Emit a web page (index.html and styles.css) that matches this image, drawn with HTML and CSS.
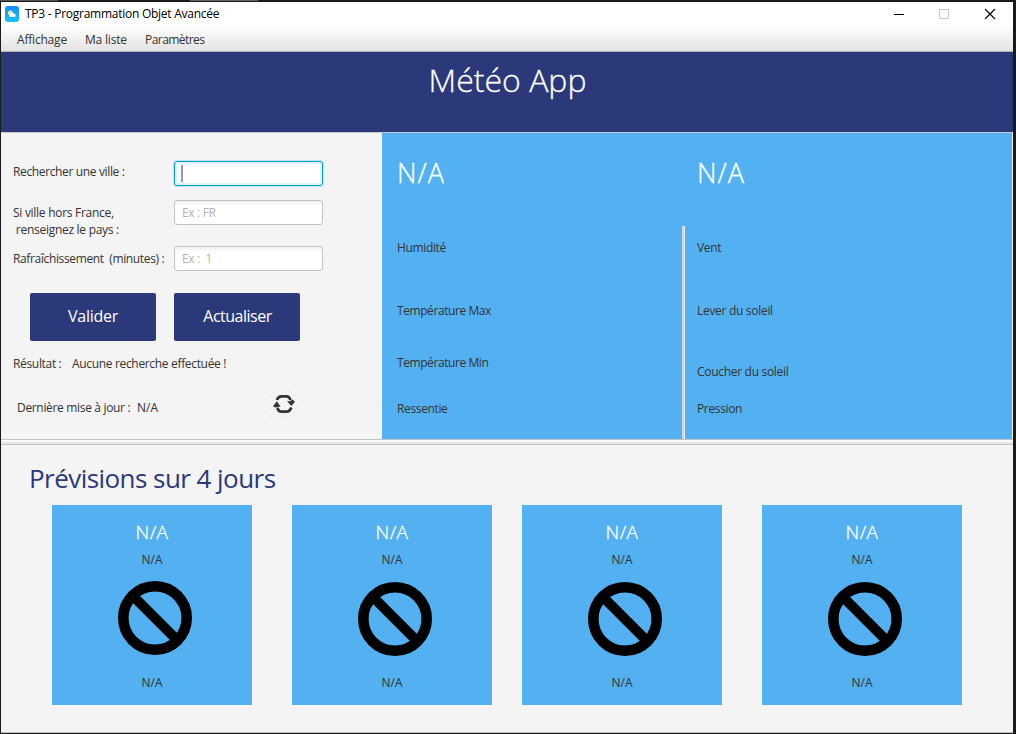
FILE: index.html
```html
<!DOCTYPE html>
<html lang="fr">
<head>
<meta charset="utf-8">
<title>TP3 - Programmation Objet Avancée</title>
<link rel="stylesheet" href="styles.css">
</head>
<body>
<svg class="defs" width="0" height="0">
  <symbol id="forbidden" viewBox="0 0 74 74">
    <circle cx="37" cy="37" r="31.700" fill="none" stroke="#000" stroke-width="10.600"/>
    <path d="M16 16 58 58" stroke="#000" stroke-width="10"/>
  </symbol>
</svg>
<div class="window">
  <header class="titlebar">
    <svg class="app-icon" width="14" height="16" viewBox="0 0 14 16">
      <defs><linearGradient id="sky" x1="0" y1="0" x2="0" y2="1"><stop offset="0" stop-color="#168bfa"/><stop offset="1" stop-color="#12c4ff"/></linearGradient></defs>
      <rect width="14" height="16" rx="3" fill="url(#sky)"/>
      <circle cx="5.300" cy="7" r="2.400" fill="#ffe680"/>
      <path d="M4.800 11a1.700 1.700 0 0 1 .3-3a2.200 2.200 0 0 1 4 -.2a1.700 1.700 0 0 1 .7 3.200z" fill="#fff"/>
    </svg>
    <span class="app-name">TP3 - Programmation Objet Avancée</span>
    <svg class="controls" width="103" height="12" viewBox="0 0 103 12">
      <path d="M0 6.500h10" stroke="#000"/>
      <rect x="45.500" y="1.500" width="9" height="9" fill="none" stroke="#ccc"/>
      <path d="M91 1l10 10M101 1l-10 10" stroke="#000" stroke-width="1.200"/>
    </svg>
  </header>
  <nav class="menubar">
    <span class="menu-1">Affichage</span>
    <span class="menu-2">Ma liste</span>
    <span class="menu-3">Paramètres</span>
  </nav>
  <div class="banner"><h1>Météo App</h1></div>
  <main class="main">
    <section class="search">
      <div class="row"><label class="l-city">Rechercher une ville :</label><div class="field focused"><i class="caret"></i></div></div>
      <div class="row row-country"><label>Si ville hors France,<br>&nbsp;renseignez le pays :</label><div class="field">Ex : FR</div></div>
      <div class="row"><label class="l-refresh">Rafraîchissement&nbsp; (minutes) :</label><div class="field">Ex :&nbsp; 1</div></div>
      <div class="buttons"><div class="button">Valider</div><div class="button narrow">Actualiser</div></div>
      <div class="result"><span class="r-label">Résultat :</span><span>Aucune recherche effectuée !</span></div>
      <div class="update">
        <span class="u-label">Dernière mise à jour :</span><span class="u-value">N/A</span>
        <svg class="refresh" width="30" height="30" viewBox="0 0 30 30">
          <path d="M0 9 9 0M0 15 7 8M0 21 5 16M0 29 6 23M12 4 16 0M20 3 23 0M24 8 30 2M26 11 30 7M26 20 30 16M22 28 30 20M12 30 17 25" stroke="#eaeaea" fill="none"/>
          <path d="M8 11Q9 7.300 12.500 7.300H17.500Q20.500 7.300 21.500 11M8.300 19Q9.500 22.600 12.500 22.600H17.500Q21 22.600 22.300 18.500" fill="none" stroke="#333" stroke-width="2.700"/>
          <path d="M18 12.300 21 12.300 23.500 10.500 26 12.800 22.300 17zM4 17.200 7.700 12.200 11.500 17.200 9 18.300 6.500 18.500z" fill="#333"/>
        </svg>
      </div>
    </section>
    <section class="weather">
      <div class="col">
        <h2>N/A</h2>
        <p class="a1">Humidité</p><p class="a2">Température Max</p><p class="a3">Température Min</p><p class="a4">Ressentie</p>
      </div>
      <div class="rule"></div>
      <div class="col">
        <h2>N/A</h2>
        <p class="a1">Vent</p><p class="a2">Lever du soleil</p><p class="b3">Coucher du soleil</p><p class="b4">Pression</p>
      </div>
    </section>
  </main>
  <div class="divider"></div>
  <section class="forecast">
    <h2>Prévisions sur 4 jours</h2>
    <div class="cards">
      <article class="card first"><h3>N/A</h3><p>N/A</p><svg width="74" height="74"><use href="#forbidden"/></svg><p class="temp">N/A</p></article>
      <article class="card"><h3>N/A</h3><p>N/A</p><svg width="74" height="74"><use href="#forbidden"/></svg><p class="temp">N/A</p></article>
      <article class="card near"><h3>N/A</h3><p>N/A</p><svg width="74" height="74"><use href="#forbidden"/></svg><p class="temp">N/A</p></article>
      <article class="card"><h3>N/A</h3><p>N/A</p><svg width="74" height="74"><use href="#forbidden"/></svg><p class="temp">N/A</p></article>
    </div>
  </section>
</div>
</body>
</html>
```
FILE: styles.css
```css
* { box-sizing: border-box; }
html, body { width: 1016px; height: 734px; overflow: hidden; }
body {
  margin: 0; padding: 2px 3px 1px 1px;
  background: linear-gradient(90deg, #555 0 58px, #1c1a1a 58px 190px, #666 190px 258px, #1c1a1a 258px) 0 0 / 1016px 1px no-repeat, #1b1a1b;
  font: 12px/18px "Open Sans", "Noto Sans", sans-serif;
  letter-spacing: -0.33px; color: #333;
}
h1, h2, h3, p { margin: 0; font-weight: 400; }
.defs { display: block; position: absolute; }
.window { width: 1012px; height: 731px; background: #f4f4f4; border-bottom: 1px solid #c0c0c0; }
.titlebar { display: flex; align-items: center; height: 25px; padding: 0 16px 1px 4px; background: #fff; color: #000; }
.app-icon { margin-right: 6px; }
.app-name { letter-spacing: -0.26px; }
.controls { margin-left: auto; }
.menubar { display: flex; height: 25px; padding: 4px 16px 0; background: linear-gradient(#fdfdfd, #e3e3e3); border-bottom: 1px solid #b5b5b5; letter-spacing: -0.2px; }
.menu-1 { width: 68px; }
.menu-2 { width: 60px; }
.menu-3 { letter-spacing: -0.55px; }
.banner { height: 81px; background: #2b397b; border-bottom: 1px solid #c8c8c8; text-align: center; padding: 4px 0 0 1px; color: #fff; }
.banner h1 { font-size: 32px; line-height: 48px; font-weight: 300; letter-spacing: 0; -webkit-text-stroke: 0.3px #fff; }
.main { display: flex; height: 306px; }
.search { width: 381px; padding: 28px 0 0 12px; }
.row { display: flex; height: 25px; margin-bottom: 14px; }
.row label { width: 161px; padding-top: 2px; white-space: nowrap; }
.row .l-city { letter-spacing: -0.36px; }
.row-country { height: 46px; margin-bottom: 0; }
.row-country label { padding-top: 4px; line-height: 17px; letter-spacing: -0.28px; }
.row + .row-country + .row { margin-bottom: 22px; }
.row .l-refresh { padding-top: 4px; letter-spacing: -0.36px; }
.field { width: 149px; height: 25px; padding: 3px 7px; line-height: 18px; color: #b3b3b3; background: linear-gradient(#f0f0f0, #fff 5px); border: 1px solid #c2c2c2; border-radius: 3px; }
.field.focused { border: 1px solid #039ed3; background: #fff; box-shadow: 0 0 0 1px #bde5f2, inset 0 0 0 2px #dff3f9; padding: 3px 6px; }
.caret { display: block; width: 2px; height: 17px; background: #999; }
.buttons { display: flex; gap: 18px; padding-left: 17px; }
.button { width: 126px; height: 48px; background: #2b397b; border-radius: 2px; color: #fff; font-size: 16px; line-height: 47px; text-align: center; letter-spacing: -0.25px; }
.button.narrow { letter-spacing: -0.5px; padding-left: 1px; }
.result { display: flex; margin-top: 14px; }
.r-label { width: 59px; }
.update { display: flex; height: 30px; margin-top: 16px; padding: 10px 0 0 4px; }
.u-label { width: 120px; }
.u-value { letter-spacing: 0; }
.refresh { margin: -10px 83px 0 auto; }
.weather { display: flex; width: 630px; background: #53b1f2; }
.col { width: 300px; padding: 20px 0 0 15px; }
.rule { width: 3px; height: 213px; margin-top: 93px; background: linear-gradient(90deg, #dedede 1px, #c1cde0 1px 2px, #eee 2px); }
.rule + .col { padding-left: 12px; }
.weather p { letter-spacing: -0.36px; }
.weather h2 { color: #fff; font-size: 27px; line-height: 40px; letter-spacing: 1px; font-weight: 300; -webkit-text-stroke: 0.3px #fff; margin-bottom: 46px; }
.weather .a2 { margin-top: 45px; letter-spacing: -0.42px; }
.weather .a3 { margin-top: 34px; letter-spacing: -0.42px; }
.weather .rule + .col .a2, .weather .b3 { letter-spacing: -0.3px; }
.a4 { margin-top: 28px; }
.b3 { margin-top: 43px; }
.b4 { margin-top: 19px; }
.divider { height: 6px; border: solid #c3c3c3; border-width: 1px 0; background: linear-gradient(#fff, #e2e2e2); }
.forecast { padding: 13px 0 0 28px; }
.forecast h2 { color: #2b397b; font-size: 26px; line-height: 40px; letter-spacing: -0.55px; }
.cards { display: flex; gap: 40px; padding: 7px 0 0 23px; }
.card { display: flex; flex-direction: column; align-items: center; width: 200px; height: 200px; padding-top: 14px; background: #53b1f2; }
.card.near { margin-left: -10px; }
.card h3 { color: #fff; font-size: 19px; line-height: 26px; letter-spacing: 0.4px; font-weight: 300; -webkit-text-stroke: 0.3px #fff; }
.card p { margin-top: 6px; line-height: 18px; letter-spacing: 0; }
.card svg { margin: 13px -6px 0 0; flex: none; }
.card.first svg { margin-top: 12px; margin-bottom: 1px; }
.card .temp { margin-top: 18px; }
```
